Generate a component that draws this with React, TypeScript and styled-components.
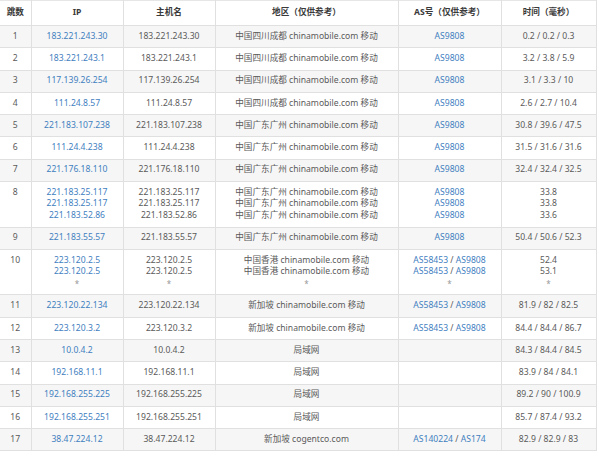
import React from "react";
import styled, { createGlobalStyle } from "styled-components";

const GlobalStyle = createGlobalStyle`
  html, body { margin: 0; padding: 0; background: #fff; }
  body {
    font-family: "Noto Sans", "Noto Sans CJK SC", sans-serif;
    color: #555;
  }
`;

type Line = { ip: string; region: string; as: string[]; time: string } | "*";
type Hop = { n: number; lines: Line[] };

const SC = "中国四川成都 chinamobile.com 移动";
const GZ = "中国广东广州 chinamobile.com 移动";
const HK = "中国香港 chinamobile.com 移动";
const SG = "新加坡 chinamobile.com 移动";
const LAN = "局域网";
const CM = ["AS9808"];
const HKAS = ["AS58453", "AS9808"];

const hops: Hop[] = [
  { n: 1, lines: [{ ip: "183.221.243.30", region: SC, as: CM, time: "0.2 / 0.2 / 0.3" }] },
  { n: 2, lines: [{ ip: "183.221.243.1", region: SC, as: CM, time: "3.2 / 3.8 / 5.9" }] },
  { n: 3, lines: [{ ip: "117.139.26.254", region: SC, as: CM, time: "3.1 / 3.3 / 10" }] },
  { n: 4, lines: [{ ip: "111.24.8.57", region: SC, as: CM, time: "2.6 / 2.7 / 10.4" }] },
  { n: 5, lines: [{ ip: "221.183.107.238", region: GZ, as: CM, time: "30.8 / 39.6 / 47.5" }] },
  { n: 6, lines: [{ ip: "111.24.4.238", region: GZ, as: CM, time: "31.5 / 31.6 / 31.6" }] },
  { n: 7, lines: [{ ip: "221.176.18.110", region: GZ, as: CM, time: "32.4 / 32.4 / 32.5" }] },
  {
    n: 8,
    lines: [
      { ip: "221.183.25.117", region: GZ, as: CM, time: "33.8" },
      { ip: "221.183.25.117", region: GZ, as: CM, time: "33.8" },
      { ip: "221.183.52.86", region: GZ, as: CM, time: "33.6" },
    ],
  },
  { n: 9, lines: [{ ip: "221.183.55.57", region: GZ, as: CM, time: "50.4 / 50.6 / 52.3" }] },
  {
    n: 10,
    lines: [
      { ip: "223.120.2.5", region: HK, as: HKAS, time: "52.4" },
      { ip: "223.120.2.5", region: HK, as: HKAS, time: "53.1" },
      "*",
    ],
  },
  { n: 11, lines: [{ ip: "223.120.22.134", region: SG, as: HKAS, time: "81.9 / 82 / 82.5" }] },
  { n: 12, lines: [{ ip: "223.120.3.2", region: SG, as: HKAS, time: "84.4 / 84.4 / 86.7" }] },
  { n: 13, lines: [{ ip: "10.0.4.2", region: LAN, as: [], time: "84.3 / 84.4 / 84.5" }] },
  { n: 14, lines: [{ ip: "192.168.11.1", region: LAN, as: [], time: "83.9 / 84 / 84.1" }] },
  { n: 15, lines: [{ ip: "192.168.255.225", region: LAN, as: [], time: "89.2 / 90 / 100.9" }] },
  { n: 16, lines: [{ ip: "192.168.255.251", region: LAN, as: [], time: "85.7 / 87.4 / 93.2" }] },
  { n: 17, lines: [{ ip: "38.47.224.12", region: "新加坡 cogentco.com", as: ["AS140224", "AS174"], time: "82.9 / 82.9 / 83" }] },
];

const Table = styled.table`
  width: 596px;
  border-collapse: collapse;
  table-layout: fixed;
  font-size: 8.6px;
  line-height: 11.7px;
  border-top: 1px solid #e6e6e6;
  border-right: 1px solid #e0e0e0;
  border-bottom: 1px solid #e0e0e0;
`;

const HeadCell = styled.th<{ $first?: boolean }>`
  font-weight: bold;
  color: #3a3a3a;
  text-align: center;
  padding: 6px 0 6.3px;
  border-bottom: 1px solid #e0e0e0;
  border-left: ${(p) => (p.$first ? "none" : "1px solid #e0e0e0")};
  background: #fff;
  white-space: nowrap;
`;

const Row = styled.tr<{ $striped: boolean }>`
  background: ${(p) => (p.$striped ? "#f6f6f6" : "#fff")};
`;

const Cell = styled.td<{ $first?: boolean }>`
  text-align: center;
  vertical-align: top;
  padding: 4.8px 0 4.77px;
  border-bottom: 1px solid #e0e0e0;
  border-left: ${(p) => (p.$first ? "none" : "1px solid #e0e0e0")};
  color: #5a5a5a;
  white-space: nowrap;
`;

const LineText = styled.div``;

const Link = styled.a`
  color: #3f80bf;
  text-decoration: none;
`;

const Sep = styled.span`
  color: #5a5a5a;
`;

const Star = styled.div`
  color: #999;
  font-size: 8px;
`;

const cols = [31, 92, 92, 183, 103, 95];

function renderLines(lines: Line[], get: (l: Exclude<Line, "*">) => React.ReactNode) {
  return lines.map((l, i) =>
    l === "*" ? <Star key={i}>*</Star> : <LineText key={i}>{get(l)}</LineText>
  );
}

export default function App() {
  return (
    <>
      <GlobalStyle />
      <Table>
        <colgroup>
          {cols.map((w, i) => (
            <col key={i} style={{ width: w }} />
          ))}
        </colgroup>
        <thead>
          <tr>
            <HeadCell $first>跳数</HeadCell>
            <HeadCell>IP</HeadCell>
            <HeadCell>主机名</HeadCell>
            <HeadCell>地区（仅供参考）</HeadCell>
            <HeadCell>AS号（仅供参考）</HeadCell>
            <HeadCell>时间（毫秒）</HeadCell>
          </tr>
        </thead>
        <tbody>
          {hops.map((h) => (
            <Row key={h.n} $striped={h.n % 2 === 1}>
              <Cell $first>{h.n}</Cell>
              <Cell>{renderLines(h.lines, (l) => <Link>{l.ip}</Link>)}</Cell>
              <Cell>{renderLines(h.lines, (l) => l.ip)}</Cell>
              <Cell>{renderLines(h.lines, (l) => l.region)}</Cell>
              <Cell>
                {renderLines(h.lines, (l) =>
                  l.as.length === 0
                    ? "\u00a0"
                    : l.as.map((a, i) => (
                        <React.Fragment key={a}>
                          {i > 0 && <Sep> / </Sep>}
                          <Link>{a}</Link>
                        </React.Fragment>
                      ))
                )}
              </Cell>
              <Cell>{renderLines(h.lines, (l) => l.time)}</Cell>
            </Row>
          ))}
        </tbody>
      </Table>
    </>
  );
}
